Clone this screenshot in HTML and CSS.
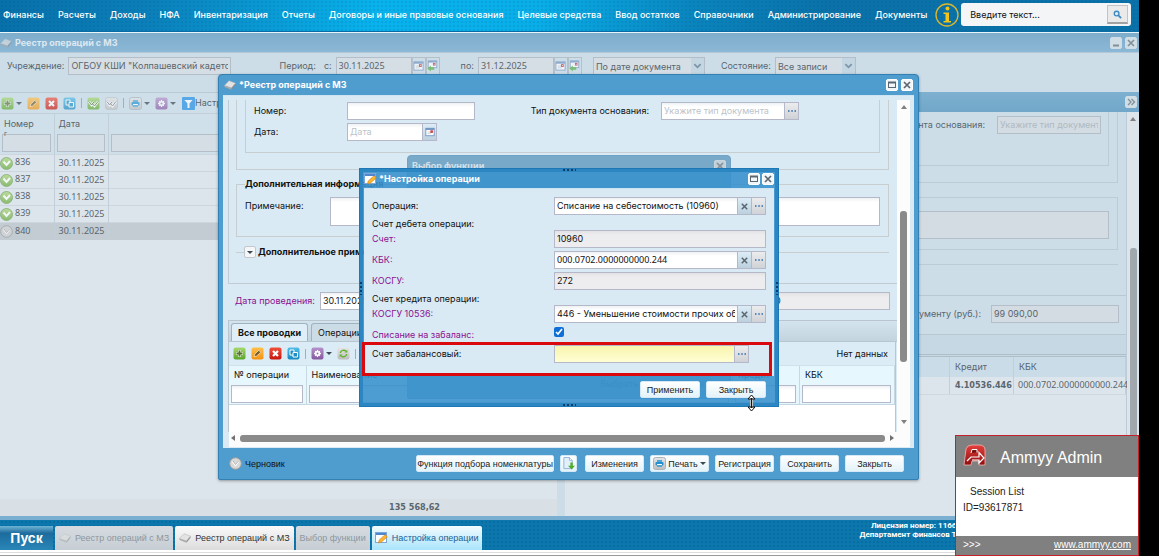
FILE: index.html
```
<!DOCTYPE html>
<html lang="ru">
<head>
  <meta charset="UTF-8" />
  <meta name="viewport" content="width=device-width, initial-scale=1.0" />
  <title>Реестр операций с МЗ</title>
  <link rel="stylesheet" href="styles.css">
</head>
<body>
  <svg class="defs" aria-hidden="true">
    <defs>
      <linearGradient id="gGreen" x2="0" y2="1"><stop offset="0" stop-color="#a8d870"/><stop offset="1" stop-color="#5aa52c"/></linearGradient>
      <linearGradient id="gOrange" x2="0" y2="1"><stop offset="0" stop-color="#ffc04a"/><stop offset="1" stop-color="#f39312"/></linearGradient>
      <linearGradient id="gRed" x2="0" y2="1"><stop offset="0" stop-color="#f0503c"/><stop offset="1" stop-color="#c8140c"/></linearGradient>
      <linearGradient id="gBlue" x2="0" y2="1"><stop offset="0" stop-color="#52bde8"/><stop offset="1" stop-color="#1888c0"/></linearGradient>
      <linearGradient id="gPurple" x2="0" y2="1"><stop offset="0" stop-color="#b592cc"/><stop offset="1" stop-color="#85579f"/></linearGradient>
      <linearGradient id="gGrey" x2="0" y2="1"><stop offset="0" stop-color="#e6e6e6"/><stop offset="1" stop-color="#bdbdbd"/></linearGradient>
      <linearGradient id="gLogo" x2="0" y2="1"><stop offset="0" stop-color="#e4413c"/><stop offset="1" stop-color="#8e0d0d"/></linearGradient>
    </defs>
    <symbol id="add" viewBox="0 0 13 13"><rect x=".5" y=".5" width="12" height="12" rx="2" fill="url(#gGreen)"/><path d="M6.500 3v7M3 6.500h7" stroke="#e8f6d8" stroke-width="3"/><path d="M6.500 3.500v6M3.500 6.500h6" stroke="#55752f" stroke-width="1.800"/></symbol>
    <symbol id="edit" viewBox="0 0 13 13"><rect x=".5" y=".5" width="12" height="12" rx="2" fill="url(#gOrange)"/><path d="M3 9.800l.8-2.800 4-3.700 1.900 2-4 3.700z" fill="#755a2c" stroke="#ffe2ae" stroke-width=".8"/></symbol>
    <symbol id="del" viewBox="0 0 13 13"><rect x=".5" y=".5" width="12" height="12" rx="2" fill="url(#gRed)"/><path d="M4 4l5 5M9 4l-5 5" stroke="#fff" stroke-width="2.200"/></symbol>
    <symbol id="copy" viewBox="0 0 13 13"><rect x=".5" y=".5" width="12" height="12" rx="2" fill="url(#gBlue)"/><path d="M3 3h4v5H3z" fill="#1d8dc4" stroke="#fff"/><path d="M6 5.500h4.500v4.500H6z" fill="#1d8dc4" stroke="#fff"/></symbol>
    <symbol id="ok" viewBox="0 0 13 13"><rect x=".5" y=".5" width="12" height="12" rx="2" fill="url(#gGreen)"/><path d="M2 4.500l2.500 3.500 2.500-3M5 6l2.500 3L11 4.500" fill="none" stroke="#fff" stroke-width="2.400"/><path d="M2 4.500l2.500 3.500 2.500-3M5 6l2.500 3L11 4.500" fill="none" stroke="#55752f" stroke-width="1"/></symbol>
    <symbol id="unok" viewBox="0 0 13 13"><rect x=".5" y=".5" width="12" height="12" rx="2" fill="url(#gGrey)" stroke="#b0b0b0" stroke-width=".6"/><path d="M2 4.500l2.500 3.500 2.500-3M5 6l2.500 3L11 4.500" fill="none" stroke="#fff" stroke-width="2.400"/><path d="M2 4.500l2.500 3.500 2.500-3M5 6l2.500 3L11 4.500" fill="none" stroke="#777" stroke-width="1"/></symbol>
    <symbol id="print" viewBox="0 0 13 13"><rect x=".5" y=".5" width="12" height="12" rx="2" fill="url(#gGrey)" stroke="#a9b4bc"/><path d="M4 3h5v2H4zM4 8.500h5V10H4z" fill="#4aa6dc"/><rect x="2.500" y="5" width="8" height="3.500" rx="1" fill="#2490d0"/><path d="M4 7.500h5" stroke="#fff"/></symbol>
    <symbol id="gear" viewBox="0 0 13 13"><rect x=".5" y=".5" width="12" height="12" rx="2" fill="url(#gPurple)"/><path d="M6.500 3v7M3 6.500h7M4.200 4.200l4.600 4.600M8.800 4.200L4.200 8.800" stroke="#fff" stroke-width="1.300"/><circle cx="6.500" cy="6.500" r="2.400" fill="#fff"/><circle cx="6.500" cy="6.500" r="1" fill="#9a74b4"/></symbol>
    <symbol id="refresh" viewBox="0 0 13 13"><rect x=".5" y=".5" width="12" height="12" rx="2" fill="url(#gGrey)"/><path d="M3.300 6A3.300 3.300 0 0 1 9 4.300M9.700 7A3.300 3.300 0 0 1 4 8.700" fill="none" stroke="#62b32e" stroke-width="1.400"/><path d="M10.300 2.800v2.800H7.500zM2.700 10.200V7.400h2.800z" fill="#62b32e"/></symbol>
    <symbol id="filter" viewBox="0 0 13 13"><rect width="13" height="13" rx="1" fill="#1a8ce8"/><path d="M2.500 3h8L7.500 6.500V11h-2V6.500z" fill="#fff"/></symbol>
    <symbol id="book" viewBox="0 0 12 10"><path d="M.5 5.500L5 .8l6.500 2.400L7.500 8z" fill="#e3e3e3" stroke="#bbb" stroke-width=".6"/><path d="M.5 5.500l7 2.500v1.700L.5 7z" fill="#aaa"/><path d="M7.500 8l4-4.800v1.600l-4 4.900z" fill="#8d8d8d"/></symbol>
    <symbol id="form" viewBox="0 0 13 12"><rect x=".5" y=".5" width="11" height="10" fill="#fff" stroke="#7da7d9"/><path d="M1 2h10" stroke="#4e87cf" stroke-width="2"/><path d="M3.500 11l.7-3L10 2.800l2.300 2L6.500 10z" fill="#ffb52e" stroke="#c77f1a" stroke-width=".6"/></symbol>
    <symbol id="cal" viewBox="0 0 12 12"><rect x="1" y="1.500" width="10" height="9" fill="#fff" stroke="#6d8fc0"/><path d="M1 2.500h10" stroke="#6d8fc0" stroke-width="2"/><path d="M3 6h5M3 8h4" stroke="#c8c8c8"/><rect x="7" y="4.500" width="2" height="2" fill="none" stroke="#c2262b"/></symbol>
    <symbol id="calback" viewBox="0 0 12 14"><rect x="1" y="1" width="10" height="8" fill="#fff" stroke="#6d8fc0"/><path d="M1 2h10" stroke="#6d8fc0" stroke-width="2"/><rect x="7" y="4" width="2" height="2" fill="none" stroke="#c2262b"/><path d="M0 10l4-3.500v2h4v3H4v2z" fill="#4fae37"/></symbol>
    <symbol id="done" viewBox="0 0 13 13"><circle cx="6.500" cy="6.500" r="6" fill="url(#gGreen)" stroke="#6b9c4c"/><path d="M3.500 4.500l3 3.500L10 4" fill="none" stroke="#fff" stroke-width="2"/></symbol>
    <symbol id="draft" viewBox="0 0 13 13"><circle cx="6.500" cy="6.500" r="5.800" fill="#d8d8d8" stroke="#9c9c9c"/><path d="M3.500 4.500l3 3.500L9.500 4.500" fill="none" stroke="#fff" stroke-width="1.800"/><path d="M4 4l2.500 3.500L9.500 4" fill="none" stroke="#8c8c8c" stroke-width=".7"/></symbol>
    <symbol id="down" viewBox="0 0 10 10"><path d="M1.500 3l3.500 3.500L8.500 3" fill="none" stroke="#4e6f8a" stroke-width="2"/></symbol>
    <symbol id="cross" viewBox="0 0 10 10"><path d="M2 2l6 6M8 2l-6 6" stroke="#5b6770" stroke-width="1.700"/></symbol>
    <symbol id="max" viewBox="0 0 10 10"><rect x="1.500" y="2.500" width="7" height="5" fill="none" stroke="#5b6770"/><path d="M1 2.500h8" stroke="#5b6770" stroke-width="2"/></symbol>
    <symbol id="min" viewBox="0 0 10 10"><path d="M2 7.500h6" stroke="#5b6770" stroke-width="2"/></symbol>
    <symbol id="more" viewBox="0 0 10 10"><path d="M1 5h1.500M4.300 5h1.500M7.500 5H9" stroke="#2f6ea8" stroke-width="1.500"/></symbol>
  </svg>

  <div class="screen">
    <nav class="topbar">
      <a href="#">Финансы</a>
      <a href="#">Расчеты</a>
      <a href="#">Доходы</a>
      <a href="#">НФА</a>
      <a href="#">Инвентаризация</a>
      <a href="#">Отчеты</a>
      <a href="#">Договоры и иные правовые основания</a>
      <a href="#">Целевые средства</a>
      <a href="#">Ввод остатков</a>
      <a href="#">Справочники</a>
      <a href="#">Администрирование</a>
      <a href="#">Документы</a>
      <svg class="info" viewBox="0 0 24 24"><circle cx="12" cy="12" r="11" fill="none" stroke="#d9b72c" stroke-width="1.300"/><circle cx="12.500" cy="5.500" r="2" fill="#f0c419"/><path d="M8.500 9.500h5.500v8.500h2v1.500H8.500V18h2v-7h-2z" fill="#f0c419"/></svg>
      <form class="search">
        <input type="text" value="Введите текст..." aria-label="Поиск">
        <button type="button" aria-label="Найти"><svg viewBox="0 0 10 10"><circle cx="4" cy="4" r="2.600" fill="none" stroke="#3d8ac4" stroke-width="1.500"/><path d="M6 6l3 3" stroke="#3d8ac4" stroke-width="2"/></svg></button>
      </form>
    </nav>

    <main class="desktop">
      <section class="registry">
        <header class="titlebar">
          <svg class="ico-book"><use href="#book"/></svg>
          <h1>Реестр операций с МЗ</h1>
          <button class="tool" aria-label="Свернуть"><svg><use href="#min"/></svg></button>
          <button class="tool" aria-label="Закрыть"><svg><use href="#cross"/></svg></button>
        </header>

        <div class="filters">
          <label for="org">Учреждение:</label>
          <input id="org" class="org" value='ОГБОУ КШИ "Колпашевский кадетский корпус"'>
          <span class="period">Период:</span>
          <label for="from">с:</label>
          <span class="date"><input id="from" value="30.11.2025"><button aria-label="Календарь"><svg><use href="#cal"/></svg></button><button aria-label="Назад"><svg><use href="#calback"/></svg></button></span>
          <label for="to" class="to">по:</label>
          <span class="date"><input id="to" value="31.12.2025"><button aria-label="Календарь"><svg><use href="#cal"/></svg></button><button aria-label="Назад"><svg><use href="#calback"/></svg></button></span>
          <span class="drop bydate"><select aria-label="Дата"><option>По дате документа</option></select><svg><use href="#down"/></svg></span>
          <label for="state">Состояние:</label>
          <span class="drop state"><select id="state"><option>Все записи</option></select><svg><use href="#down"/></svg></span>
        </div>

        <div class="panes">
          <div class="list">
            <div class="toolbar">
              <button aria-label="Добавить"><svg><use href="#add"/></svg><i class="caret"></i></button>
              <button aria-label="Изменить"><svg><use href="#edit"/></svg></button>
              <button aria-label="Удалить"><svg><use href="#del"/></svg></button>
              <button aria-label="Копировать"><svg><use href="#copy"/></svg></button>
              <i class="sep"></i>
              <button aria-label="Провести"><svg><use href="#ok"/></svg></button>
              <button aria-label="Отменить"><svg><use href="#unok"/></svg></button>
              <i class="sep"></i>
              <button aria-label="Печать"><svg><use href="#print"/></svg><i class="caret"></i></button>
              <button aria-label="Действия"><svg><use href="#gear"/></svg><i class="caret"></i></button>
              <button class="setup"><svg><use href="#filter"/></svg>Настройка</button>
            </div>
            <table>
              <thead>
                <tr><th class="num">Номер<small>г</small></th><th class="dt">Дата</th><th></th></tr>
                <tr><td><input aria-label="Номер"></td><td><input aria-label="Дата"></td><td><input aria-label="Поиск"></td></tr>
              </thead>
              <tbody>
                <tr><td><svg><use href="#done"/></svg>836</td><td>30.11.2025</td><td></td></tr>
                <tr><td><svg><use href="#done"/></svg>837</td><td>30.11.2025</td><td></td></tr>
                <tr><td><svg><use href="#done"/></svg>838</td><td>30.11.2025</td><td></td></tr>
                <tr><td><svg><use href="#done"/></svg>839</td><td>30.11.2025</td><td></td></tr>
                <tr class="selected"><td><svg><use href="#draft"/></svg>840</td><td>30.11.2025</td><td></td></tr>
              </tbody>
            </table>
            <div class="total">135 568,62</div>
          </div>

          <div class="detail">
            <div class="detail-head"><button class="tool" aria-label="Свернуть панель"><svg viewBox="0 0 10 10"><path d="M2 2l3 3-3 3M5.500 2l3 3-3 3" fill="none" stroke="#5b6770" stroke-width="1.300"/></svg></button></div>
            <div class="detail-body">
              <div class="sheet">
                <div class="outer">
                  <div class="inner"><label for="basis">Тип документа основания:</label><input id="basis" placeholder="Укажите тип документа"></div>
                </div>
                <div class="note"><textarea aria-label="Примечание" readonly></textarea></div>
                <div class="rule"></div>
              </div>
              <div class="sum"><label for="sum">Сумма по документу (руб.):</label><input id="sum" value="99 090,00" readonly></div>
              <div class="band"></div>
              <table>
                <thead><tr><th></th><th class="credit">Кредит</th><th class="kbk">КБК</th></tr></thead>
                <tbody><tr><td></td><td><b>4.10536.446</b></td><td>000.0702.0000000000.244</td></tr></tbody>
              </table>
            </div>
            <div class="vbar"><i class="up"></i><i class="thumb"></i></div>
          </div>
        </div>
      </section>

      <section class="window doc">
        <header class="titlebar">
          <svg class="ico-book"><use href="#book"/></svg>
          <h2>*Реестр операций с МЗ</h2>
          <button class="tool" aria-label="Развернуть"><svg><use href="#max"/></svg></button>
          <button class="tool" aria-label="Закрыть"><svg><use href="#cross"/></svg></button>
        </header>
        <div class="doc-body">
          <div class="doc-main">
            <div class="sheet">
              <div class="outer">
                <div class="inner">
                  <label for="num">Номер:</label><input id="num">
                  <label for="basis2" class="right">Тип документа основания:</label>
                  <span class="field"><input id="basis2" placeholder="Укажите тип документа"><button class="pick" aria-label="Выбрать"><svg><use href="#more"/></svg></button></span>
                  <label for="docdate">Дата:</label>
                  <span class="field short"><input id="docdate" placeholder="Дата"><button aria-label="Календарь"><svg><use href="#cal"/></svg></button></span>
                </div>
              </div>
              <fieldset>
                <legend>Дополнительная информация</legend>
                <label for="note">Примечание:</label><textarea id="note"></textarea>
              </fieldset>
              <fieldset class="closed">
                <legend><button aria-label="Раскрыть"><i class="caret"></i></button>Дополнительное примечание</legend>
              </fieldset>
            </div>
            <div class="posted"><label for="posted">Дата проведения:</label><input id="posted" value="30.11.2025"><input class="amount" value="0" aria-label="Сумма" readonly></div>
            <div class="tabs"><button class="active">Все проводки</button><button>Операции</button></div>
            <div class="grid">
              <div class="toolbar">
                <button aria-label="Добавить"><svg><use href="#add"/></svg></button>
                <button aria-label="Изменить"><svg><use href="#edit"/></svg></button>
                <button aria-label="Удалить"><svg><use href="#del"/></svg></button>
                <button aria-label="Копировать"><svg><use href="#copy"/></svg></button>
                <i class="sep"></i>
                <button aria-label="Действия"><svg><use href="#gear"/></svg><i class="caret"></i></button>
                <button aria-label="Обновить"><svg><use href="#refresh"/></svg></button>
                <i class="sep"></i>
                <span class="empty">Нет данных</span>
              </div>
              <table>
                <thead>
                  <tr><th class="c1">№ операции</th><th>Наименование</th><th class="c3">Кредит</th><th class="c4">КБК</th></tr>
                  <tr><td><input aria-label="№ операции"></td><td><input aria-label="Наименование"></td><td><input aria-label="Кредит"></td><td><input aria-label="КБК"></td></tr>
                </thead>
              </table>
            </div>
          </div>
          <div class="vbar"><i class="up"></i><i class="thumb"></i><i class="dn"></i></div>
          <div class="hbar"><i class="lt"></i><i class="thumb"></i><i class="rt"></i></div>
        </div>
        <footer class="doc-foot">
          <span class="status"><svg><use href="#draft"/></svg>Черновик</span>
          <button class="btn auto">Функция подбора номенклатуры</button>
          <button class="btn square" aria-label="Загрузить"><svg viewBox="0 0 14 14"><path d="M2 .5h6l3 3v9H2z" fill="#e3f0fb" stroke="#8fb2d6"/><path d="M8 .5v3h3" fill="#fff" stroke="#8fb2d6"/><path d="M9 6h2.500v3.500H14l-3.700 4-3.800-4H9z" fill="#4caf27"/></svg></button>
          <button class="btn">Изменения</button>
          <button class="btn"><svg><use href="#print"/></svg>Печать<i class="caret"></i></button>
          <button class="btn">Регистрация</button>
          <button class="btn">Сохранить</button>
          <button class="btn">Закрыть</button>
        </footer>
      </section>

      <section class="window picker">
        <header class="titlebar"><h2>Выбор функции</h2><button class="tool" aria-label="Закрыть"><svg><use href="#cross"/></svg></button></header>
        <footer><span>Выбрать</span><span>Отмена</span></footer>
      </section>

      <section class="setup-op">
        <i class="grip top"></i><i class="grip bottom"></i><i class="grip left"></i><i class="grip end"></i>
        <header class="titlebar">
          <svg class="ico-form"><use href="#form"/></svg>
          <h2>*Настройка операции</h2>
          <button class="tool" aria-label="Развернуть"><svg><use href="#max"/></svg></button>
          <button class="tool" aria-label="Закрыть"><svg><use href="#cross"/></svg></button>
        </header>
        <form>
          <div class="row"><label for="op">Операция:</label><span class="field"><input id="op" value="Списание на себестоимость (10960)"><button type="button" class="clear" aria-label="Очистить"><svg><use href="#cross"/></svg></button><button type="button" class="pick" aria-label="Выбрать"><svg><use href="#more"/></svg></button></span></div>
          <p>Счет дебета операции:</p>
          <div class="row req"><label for="acc">Счет:</label><span class="field"><input id="acc" value="10960" readonly></span></div>
          <div class="row req"><label for="kbk">КБК:</label><span class="field"><input id="kbk" class="code" value="000.0702.0000000000.244"><button type="button" class="clear" aria-label="Очистить"><svg><use href="#cross"/></svg></button><button type="button" class="pick" aria-label="Выбрать"><svg><use href="#more"/></svg></button></span></div>
          <div class="row req"><label for="kosgu">КОСГУ:</label><span class="field"><input id="kosgu" value="272" readonly></span></div>
          <p>Счет кредита операции:</p>
          <div class="row req"><label for="kosgu2">КОСГУ 10536:</label><span class="field"><input id="kosgu2" value="446 - Уменьшение стоимости прочих оборотных"><button type="button" class="clear" aria-label="Очистить"><svg><use href="#cross"/></svg></button><button type="button" class="pick" aria-label="Выбрать"><svg><use href="#more"/></svg></button></span></div>
          <div class="row req check"><label for="off">Списание на забаланс:</label><input type="checkbox" id="off" checked></div>
          <div class="row marked"><label for="offacc">Счет забалансовый:</label><span class="field"><input id="offacc"><button type="button" class="pick" aria-label="Выбрать"><svg><use href="#more"/></svg></button></span></div>
        </form>
        <footer>
          <button class="btn">Применить</button>
          <button class="btn">Закрыть</button>
        </footer>
        <svg class="cursor" viewBox="0 0 9 18"><path d="M4.500 3v12" stroke="#fff" stroke-width="3"/><path d="M4.500 1L8 5H1zM4.500 17L1 13h7z" fill="#fff" stroke="#111"/><path d="M4.500 4v10" stroke="#111" stroke-width="1.500"/></svg>
      </section>
    </main>

    <footer class="taskbar">
      <button class="start">Пуск</button>
      <button class="task off"><svg class="ico-book"><use href="#book"/></svg>Реестр операций с МЗ</button>
      <button class="task"><svg class="ico-book"><use href="#book"/></svg>Реестр операций с МЗ</button>
      <button class="task off">Выбор функции</button>
      <button class="task current"><svg class="ico-form"><use href="#form"/></svg>Настройка операции</button>
      <div class="licence">Лицензия номер: 1166001400<br>Департамент Финансов Томской</div>
    </footer>
    <div class="scrollstrip"></div>

    <aside class="ammyy">
      <header>
        <svg viewBox="0 0 24 22"><path d="M1 21L3 5q1-4 6-4h7q6 0 6 5v15h-6v-4h-7l-1 4z" fill="url(#gLogo)" stroke="#f0b8b8" stroke-width=".8"/><path d="M8 9l1-3.500h5v3" fill="#7c1010" stroke="#fff" stroke-width="1"/><path d="M4 17l4-4h8V8.500l5 5.500-5 5v-3H9" fill="none" stroke="#fff" stroke-width="1.200"/></svg>
        <strong>Ammyy Admin</strong>
      </header>
      <div class="session"><p>Session List</p><p>ID=93617871</p></div>
      <footer><span>&gt;&gt;&gt;</span><a href="#">www.ammyy.com</a></footer>
    </aside>
  </div>
</body>
</html>
```
FILE: styles.css
```
* {
  box-sizing: border-box;
}
body {
  margin: 0;
  background: #000;
  color: #111;
  font: 9px/12px Inter, "Noto Sans", sans-serif;
}
h1, h2, p, form, fieldset {
  margin: 0;
  padding: 0;
}
button, input, select, textarea {
  font: inherit;
  color: inherit;
  margin: 0;
}
button {
  display: flex;
  align-items: center;
  justify-content: center;
  padding: 0;
  border: 0;
  background: none;
}
input, textarea, select {
  display: block;
  min-width: 0;
  height: 18px;
  padding: 0 2px;
  border: 1px solid #b5b8c8;
  border-radius: 0;
  background: #fff linear-gradient(#eef1f3, #fff 4px);
}
input[readonly] {
  background: #ececee linear-gradient(#e2e2e4, #ededef 4px);
}
::placeholder {
  color: #bcc3c9;
}
textarea {
  resize: none;
}
svg {
  display: block;
  flex: none;
}
.defs {
  position: absolute;
  width: 0;
  height: 0;
}
.screen {
  position: relative;
  display: flex;
  flex-direction: column;
  min-height: 100vh;
  margin-right: 20px;
  background: #fff;
}

/* top menu */
.topbar {
  display: flex;
  align-items: center;
  gap: 14px;
  height: 33px;
  padding: 0 8px 3px 3px;
  border-bottom: 1px solid #e8f6fc;
  box-shadow: inset 0 -1px #0a6ba5;
  background:
    radial-gradient(circle, rgba(0, 70, 120, .12) 1px, transparent 1px) 0 0 / 4px 4px,
    linear-gradient(100deg, #0870a9, #0b7fb9 13%, #08b2ec 33%, #09aee8 47%, #0a84bd 61%, #0a72a9 72%, #0a72a9);
}
.topbar a {
  color: #fff;
  font-weight: 500;
  text-decoration: none;
  white-space: nowrap;
}
.info {
  width: 24px;
  height: 24px;
  margin-left: -6px;
}
.search {
  display: flex;
  flex: 1;
  align-items: center;
  min-width: 0;
  height: 23px;
  margin-left: -12px;
  padding: 0 3px;
  border-radius: 3px;
  background: #f4f5f6;
}
.search input {
  flex: 1;
  width: 0;
  padding: 0 6px;
  border: 0;
  background: none;
}
.search button {
  width: 21px;
  height: 19px;
  border: 1px solid #c3c3c3;
  border-bottom: 2px solid #a2a2a2;
  background: #eaeaea;
}
.search svg {
  width: 9px;
  height: 9px;
}

/* shared window parts */
.desktop {
  position: relative;
  display: flex;
  flex: 1;
  background: #0f74ab;
}
.titlebar {
  display: flex;
  align-items: center;
  gap: 3px;
  height: 20px;
  color: #fff;
}
.titlebar h1,
.titlebar h2 {
  flex: 1;
  font-size: 9px;
  line-height: 12px;
  white-space: nowrap;
}
.ico-book {
  width: 12px;
  height: 10px;
}
.ico-form {
  width: 13px;
  height: 12px;
}
.tool {
  width: 12px;
  height: 12px;
  border: 1px solid #fff;
  border-radius: 2px;
  background: #f3f6f8;
}
.tool svg {
  width: 10px;
  height: 10px;
}
.caret {
  border: 3px solid transparent;
  border-top-color: #3c4a55;
  border-bottom: 0;
}
.sep {
  width: 1px;
  height: 10px;
  background: #9db0bd;
}
.toolbar {
  display: flex;
  align-items: center;
  gap: 5px;
  height: 21px;
}
.toolbar button svg {
  width: 13px;
  height: 13px;
}
.toolbar button .caret {
  margin-left: 2px;
}
table {
  width: 100%;
  border-collapse: collapse;
  table-layout: fixed;
}
th, td {
  padding: 0;
  font-weight: 400;
  text-align: left;
  white-space: nowrap;
}
.btn {
  min-width: 60px;
  height: 17px;
  gap: 2px;
  border: 1px solid #d4e9f5;
  border-radius: 2px;
  background: linear-gradient(#fff, #e3f3f9);
  color: #222;
  font-family: "Liberation Sans", sans-serif;
}
.vbar {
  display: flex;
  flex-direction: column;
  align-items: center;
  background: #fcfcfc;
}
.vbar .up {
  border: 3px solid transparent;
  border-top: 0;
  border-bottom: 4px solid #808080;
}
.vbar .dn {
  border: 3px solid transparent;
  border-bottom: 0;
  border-top: 4px solid #808080;
}
.vbar .thumb {
  width: 7px;
  border-radius: 3px;
  background: #8a8a8a;
}

/* registry window in the background, dimmed by the modal mask */
.registry {
  display: flex;
  flex: 1;
  flex-direction: column;
  min-width: 0;
  border-bottom: 4px solid #7bafd2;
  background: #ccdde8;
  color: #5a656d;
}
.registry .titlebar {
  padding-right: 2px;
  background: linear-gradient(#7eaccb, #8cb8d7);
  color: #dde8f0;
  border-bottom: 1px solid #b4c8d6;
}
.registry .tool {
  border-color: #cfdde6;
  background: #d2dee6;
}
.registry svg {
  opacity: .65;
}
.registry .caret {
  opacity: .7;
}
.registry input,
.registry select,
.registry textarea {
  border-color: #b4bec8;
  background: #d5dee5;
}
.registry .detail input,
.registry .detail textarea {
  background: #d3dce2;
}
.registry ::placeholder {
  color: #aebac3;
}
.filters {
  display: flex;
  gap: 4px;
  height: 39px;
  padding: 4px 7px;
  line-height: 18px;
}
.filters .org {
  width: 163px;
}
.filters .period {
  margin-left: 44px;
  margin-right: 4px;
}
.filters .date {
  display: flex;
}
.filters .date input {
  width: 76px;
}
.filters .date button {
  width: 14px;
  height: 18px;
  border: 1px solid #b4c0ca;
}
.filters .date svg {
  width: 11px;
  height: 12px;
}
.filters .to {
  margin-left: 17px;
}
.drop {
  position: relative;
}
.drop select {
  width: 100%;
  appearance: none;
}
.drop svg {
  position: absolute;
  top: 1px;
  right: 1px;
  width: 13px;
  height: 16px;
  padding: 3px 2px;
  background: #bcd2df;
  pointer-events: none;
}
.bydate {
  width: 112px;
  margin: 0 12px 0 7px;
}
.state {
  width: 81px;
}
.panes {
  display: flex;
  flex: 1;
  gap: 8px;
}
.list {
  display: flex;
  flex: 0 1 557px;
  flex-direction: column;
  min-width: 0;
  border-top: 1px solid #b9cad5;
  background: #dde5ec;
}
.list .toolbar {
  padding-left: 1px;
  background: #cfdfe9;
  border-bottom: 1px solid #c2cfd8;
}
.list .setup {
  margin-left: 1px;
}
.list thead {
  background: #cfe0ea;
}
.list th {
  height: 19px;
  padding: 4px 4px 0;
  line-height: 12px;
  vertical-align: top;
}
.list th small {
  display: block;
  height: 2px;
  font-size: 7px;
  line-height: 8px;
}
.list .num {
  width: 54px;
}
.list .dt {
  width: 54px;
}
.list thead td {
  padding: 1px 3px 2px 2px;
}
.list thead input {
  width: 100%;
}
.list th, .list td {
  border-right: 1px solid #c3cfd8;
}
.list td,
.date input,
.detail td,
.code {
  font-family: "Noto Sans", sans-serif;
}
.list tbody td {
  height: 17px;
  padding-left: 4px;
  border-top: 1px solid #cdd6dd;
}
.list tbody td:first-child {
  padding-left: 0;
}
.list tbody svg {
  display: inline-block;
  width: 13px;
  height: 13px;
  margin-right: 2px;
  vertical-align: middle;
}
.list .selected {
  background: #c3ccd3;
}
.total {
  height: 17px;
  margin-top: auto;
  padding-right: 117px;
  background: #d8dfe5;
  font: 700 9px/16px "DejaVu Sans Condensed", sans-serif;
  text-align: right;
}
.detail {
  display: grid;
  grid-template: 20px 1fr / 1fr 12px;
  flex: 1;
  min-width: 0;
  background: #ccdde8;
}
.detail-head {
  display: flex;
  grid-column: 1 / 3;
  align-items: center;
  justify-content: flex-end;
  padding-right: 2px;
  background: linear-gradient(#7eb0d0, #71a7ca);
}
.detail-body {
  display: flex;
  flex-direction: column;
  min-width: 0;
  border-right: 1px solid #bccbd6;
  background: #dde5ec;
}
.detail .sheet {
  height: 184px;
  padding: 0 8px;
  border-bottom: 1px solid #b9c9d4;
  background: #ccdde8;
}
.detail .outer {
  height: 71px;
  padding: 0 8px;
  border: solid #bccbd6;
  border-width: 0 1px 1px;
}
.detail .inner {
  display: flex;
  justify-content: flex-end;
  gap: 12px;
  height: 54px;
  padding: 4px 7px;
  border: solid #bccbd6;
  border-width: 0 1px 1px;
  line-height: 18px;
}
.detail .inner input {
  width: 104px;
}
.detail .note {
  height: 53px;
  margin-top: 14px;
  padding: 13px 8px;
  border: 1px solid #bccbd6;
}
.detail textarea {
  width: 100%;
  height: 28px;
}
.detail .rule {
  height: 15px;
  border-bottom: 1px solid #bccbd6;
}
.detail .sum {
  display: flex;
  justify-content: flex-end;
  gap: 10px;
  height: 38px;
  padding: 9px 7px;
  line-height: 18px;
  background: #ccdde8;
}
.detail .sum input {
  width: 128px;
}
.detail .band {
  height: 23px;
  border-top: 1px solid #b9c9d4;
  border-bottom: 3px double #b0bec8;
  background: #c5d8e3;
}
.detail th, .detail td {
  height: 20px;
  padding-left: 5px;
  border-right: 1px solid #c3cfd8;
}
.detail th {
  background: #cadce7;
}
.detail td {
  height: 17px;
  border-bottom: 1px solid #d1d9e0;
}
.detail td b {
  font: 700 9px/12px "DejaVu Sans Condensed", sans-serif;
}
.detail td:last-child {
  padding-left: 4px;
}
.detail .credit {
  width: 64px;
}
.detail .kbk {
  width: 112px;
}
.detail .vbar {
  padding-top: 5px;
  background: #dde4ea;
}
.detail .vbar .thumb {
  flex: 1;
  margin-top: 127px;
  background: #a0a8ae;
}

/* document window */
.window {
  position: absolute;
  padding: 0 4px;
  border: 1px solid #3380b5;
  border-radius: 4px 4px 2px 2px;
  background: #4f9dcf;
}
.doc {
  top: 41px;
  left: 218px;
  width: 701px;
  box-shadow: 0 1px 3px rgba(0, 0, 0, .35);
}
.doc .titlebar {
  padding: 0 1px;
}
.doc-body {
  display: grid;
  grid-template: 1fr 15px / 1fr 13px;
  padding: 4px 4px 1px 5px;
  border-top: 1px solid #cfe4f1;
  background: #d9eaf5;
}
.doc-main {
  min-width: 0;
}
.doc .sheet {
  height: 184px;
  padding: 0 8px 0 7px;
  border: solid #c0cbd3;
  border-width: 0 0 1px 1px;
}
.doc .outer {
  height: 70px;
  padding: 0 8px;
  border: solid #c8cdd0;
  border-width: 0 1px 1px;
}
.doc .inner {
  display: grid;
  grid-template-columns: 93px 128px 1fr 138px;
  align-content: start;
  gap: 3px 0;
  height: 53px;
  padding: 2px 80px 0 8px;
  border: solid #c8cdd0;
  border-width: 0 1px 1px;
  line-height: 18px;
}
.doc .right {
  padding-right: 12px;
  text-align: right;
}
.field {
  display: flex;
}
.field input {
  flex: 1;
}
.field button {
  width: 14px;
  height: 18px;
  border: 1px solid #b5b8c8;
  border-left: 0;
  background: linear-gradient(#dcedf7, #bcd0de);
}
.field svg {
  width: 10px;
  height: 10px;
}
.field .pick {
  background: linear-gradient(#ececee, #cfd2d6);
}
.field .clear svg {
  width: 9px;
  height: 9px;
}
.short {
  width: 90px;
}
.doc fieldset {
  display: flex;
  height: 59px;
  margin-top: 8px;
  padding: 7px 8px;
  border: 1px solid #c8cdd0;
  line-height: 18px;
}
.doc legend {
  display: flex;
  align-items: center;
  gap: 2px;
  padding: 0;
  font-weight: 700;
  line-height: 12px;
}
.doc fieldset label {
  width: 85px;
}
.doc fieldset textarea {
  flex: 1;
  height: 29px;
}
.doc .closed {
  height: 12px;
  margin-top: 9px;
  border-width: 1px 0 0;
}
.doc legend button {
  width: 12px;
  height: 12px;
  border: 1px solid #c0c8ce;
  border-radius: 2px;
  background: #f4f6f8;
}
.posted {
  display: flex;
  height: 36px;
  padding: 8px 7px 0;
  line-height: 18px;
  color: #8b1090;
}
.posted label {
  width: 85px;
}
.posted input {
  width: 90px;
  color: #222;
}
.posted .amount {
  width: 118px;
  margin-left: auto;
}
.tabs {
  display: flex;
  gap: 3px;
  align-items: flex-end;
  height: 22px;
  padding: 0 2px;
  border: solid #b9c6cf;
  border-width: 1px 0 1px 1px;
  background: linear-gradient(#d3e4ee, #c3d4df);
}
.tabs button {
  height: 18px;
  padding: 0 6px;
  border: 1px solid #9fb3c1;
  border-bottom: 0;
  border-radius: 3px 3px 0 0;
  background: #cbdce7;
}
.tabs .active {
  background: #e0eff7;
  font-weight: 700;
}
.grid {
  min-height: 90px;
  margin-right: 1px;
  border-left: 1px solid #b9c6cf;
  border-right: 1px solid #b9c6cf;
  background: #fff;
}
.grid .toolbar {
  height: 24px;
  padding: 0 7px 0 4px;
  border-bottom: 1px solid #d2e1ea;
  background: #dcecf6;
}
.grid .empty {
  margin-left: auto;
}
.grid thead {
  background: #e6f8fd;
  border-bottom: 1px solid #c5d7e2;
}
.grid th {
  height: 18px;
  padding-left: 5px;
}
.grid thead td {
  padding: 1px 3px 1px 2px;
}
.grid th, .grid td {
  border-right: 1px solid #c8d8e0;
}
.grid input {
  width: 100%;
}
.grid .c1 {
  width: 77px;
}
.grid .c3 {
  width: 67px;
}
.grid .c4 {
  width: 95px;
}
.doc-body > .vbar {
  padding: 5px 0 8px;
}
.doc-body > .vbar .thumb {
  height: 151px;
  margin: 102px 0 auto;
}
.hbar {
  display: flex;
  grid-column: 1 / 3;
  align-items: center;
  gap: 5px;
  margin-left: 1px;
  padding: 0 16px 3px 2px;
  background: #fcfcfc;
}
.hbar .thumb {
  flex: 1;
  height: 7px;
  border-radius: 3px;
  background: #8a8a8a;
}
.hbar .lt {
  border: 3px solid transparent;
  border-left: 0;
  border-right: 4px solid #707070;
}
.hbar .rt {
  border: 3px solid transparent;
  border-right: 0;
  border-left: 4px solid #707070;
}
.doc-foot {
  display: flex;
  align-items: center;
  gap: 6px;
  height: 31px;
  padding: 0 10px 0 6px;
}
.status {
  display: flex;
  align-items: center;
  gap: 3px;
  margin-right: auto;
  font-family: "Liberation Sans", sans-serif;
}
.doc-foot svg {
  width: 13px;
  height: 13px;
}
.doc-foot .btn {
  min-width: 59px;
}
.doc-foot .square {
  min-width: 17px;
  margin-right: 2px;
}

/* dimmed function picker under the modal */
.picker {
  display: flex;
  flex-direction: column;
  top: 122px;
  left: 407px;
  width: 324px;
  height: 244px;
  border-color: #70a3c6;
  background: #78a9c9;
}
.picker h2 {
  color: #d4e1ea;
}
.picker .tool {
  border-color: #c9d6de;
  background: #c3d0d9;
}
.picker .tool svg {
  opacity: .6;
}
.picker footer {
  display: flex;
  justify-content: flex-end;
  gap: 32px;
  margin-top: auto;
  padding: 8px 22px;
  color: #4a6c84;
}

/* operation setup modal */
.setup-op {
  position: absolute;
  top: 135px;
  left: 359px;
  width: 420px;
  padding: 0 4px;
  border: 1px solid #1f78b6;
  box-shadow: inset 0 0 0 3px #2c86c2;
  background: rgba(58, 146, 205, .9);
}
.setup-op .titlebar {
  gap: 2px;
  height: 19px;
}
.setup-op form {
  padding-top: 8px;
  border-top: 1px solid #cfe4f1;
  background: #d9eaf5;
}
.setup-op .row {
  display: flex;
  margin-bottom: 3px;
  padding: 0 8px;
  line-height: 18px;
}
.setup-op label {
  width: 182px;
}
.setup-op form p {
  padding: 0 8px;
}
.setup-op .field {
  flex: 0 1 212px;
}
.setup-op .req label {
  color: #8b1090;
}
.setup-op .check {
  height: 16px;
  margin: 0;
}
.setup-op input[type="checkbox"] {
  width: 10px;
  height: 10px;
  margin: 1px 0 0;
  accent-color: #0f6fd6;
}
.setup-op .marked {
  height: 34px;
  margin: 0 2px 0 -2px;
  padding: 0 20px 0 7px;
  border: 3px solid #d9090e;
}
.setup-op .marked .field {
  flex: 0 1 195px;
}
.setup-op .marked input {
  background: #ffffc4 linear-gradient(#f7f3ae, #ffffd2);
}
.setup-op footer {
  display: flex;
  justify-content: flex-end;
  gap: 6px;
  height: 30px;
  padding: 5px 8px;
}
.grip {
  position: absolute;
  width: 13px;
  height: 2px;
  background: repeating-linear-gradient(90deg, #0a3f6c 0 2px, transparent 2px 4px);
}
.grip.top {
  top: 0;
  left: 203px;
}
.grip.bottom {
  bottom: 0;
  left: 203px;
}
.grip.left,
.grip.end {
  top: 113px;
  width: 2px;
  height: 13px;
  background: repeating-linear-gradient(#0a3f6c 0 2px, transparent 2px 4px);
}
.grip.left {
  left: 0;
}
.grip.end {
  right: 0;
}
.cursor {
  position: absolute;
  right: 22px;
  bottom: -6px;
  width: 9px;
  height: 18px;
}

/* taskbar */
.taskbar {
  display: flex;
  align-items: flex-end;
  gap: 2px;
  height: 30px;
  background:
    radial-gradient(circle, rgba(0, 60, 105, .18) 1px, transparent 1px) 0 0 / 4px 4px,
    #0b77ad;
  font-family: "Liberation Sans", sans-serif;
}
.start {
  width: 53px;
  height: 24px;
  background: linear-gradient(#6fb4d6, #1c6c9d 30%, #2a86b8);
  color: #fff;
  font: 700 14px/16px "Liberation Sans", sans-serif;
}
.task {
  gap: 4px;
  height: 24px;
  padding: 0 4px;
  border-radius: 2px 2px 0 0;
  background: linear-gradient(#fafafa, #dcdcdc);
  color: #333;
}
.task.off {
  background: linear-gradient(#d5dbe0, #c6ced5);
  color: #8d979f;
}
.task.off svg {
  opacity: .5;
}
.task.current {
  padding: 0 3px;
  background: linear-gradient(#f2fbff, #a9e4fb);
  color: #1a5f94;
}
.licence {
  margin-left: auto;
  padding: 0 155px 11px 0;
  color: #fff;
  font: 700 8px/9px Roboto, sans-serif;
  text-align: right;
}
.scrollstrip {
  height: 6px;
  border-top: 2px solid #fff;
  background: linear-gradient(#ddd 1px, #fff 1px 3px, #999 3px);
}

/* remote session badge */
.ammyy {
  position: absolute;
  right: 0;
  bottom: 0;
  width: 184px;
  border: 1px solid #c4202a;
  background: #fff;
  color: #222;
  font: 10px/16px "Liberation Sans", sans-serif;
}
.ammyy header {
  display: flex;
  align-items: center;
  gap: 13px;
  height: 41px;
  padding: 3px 7px 0;
  background: #808080;
  color: #fff;
}
.ammyy header svg {
  width: 24px;
  height: 22px;
  margin-bottom: 6px;
}
.ammyy strong {
  font-size: 16px;
  font-weight: 400;
}
.session {
  height: 59px;
  padding: 7px;
}
.session p:first-child {
  padding-left: 7px;
}
.ammyy footer {
  display: flex;
  justify-content: space-between;
  height: 19px;
  padding: 1px 7px;
  background: #808080;
  color: #fff;
}
.ammyy a {
  color: #fff;
}
```
